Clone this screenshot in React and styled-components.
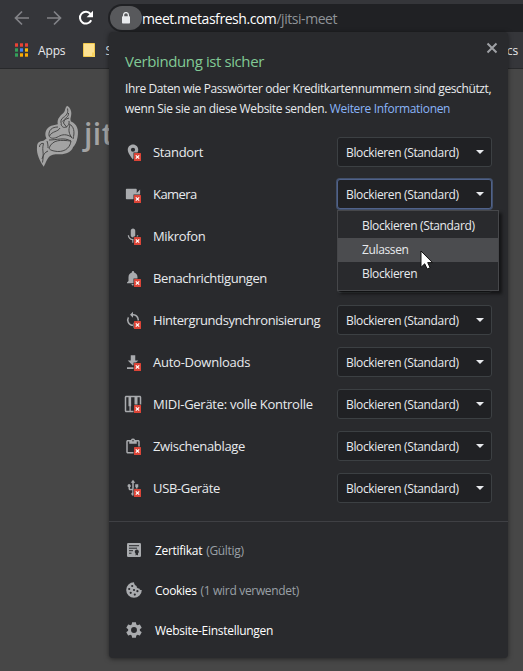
import React from 'react';
import styled, { createGlobalStyle } from 'styled-components';

const GlobalStyle = createGlobalStyle`
  * { box-sizing: border-box; }
  body {
    margin: 0;
    overflow: hidden;
    background: #474747;
    font-family: "Open Sans", "Noto Sans", sans-serif;
    font-size: 12px;
    color: #e8eaed;
  }
  svg { display: block; flex: none; }
`;

const Browser = styled.div`
  position: relative;
  width: 523px;
  height: 671px;
  overflow: hidden;
`;
const Toolbar = styled.header`
  display: flex;
  align-items: center;
  height: 36px;
  padding-left: 12px;
  background: #35363a;
`;
const NavButton = styled.span`
  display: flex;
  justify-content: center;
  width: 20px;
  margin-right: 12px;
`;
const AddressBar = styled.div`
  display: flex;
  align-items: center;
  flex: 1;
  height: 28px;
  padding-left: 2px;
  background: #202124;
  border-radius: 14px 0 0 14px;
  font-size: 14px;
  letter-spacing: -0.45px;
  color: #fff;
  white-space: nowrap;
`;
const LockChip = styled.span`
  display: flex;
  align-items: center;
  justify-content: center;
  width: 32px;
  height: 24px;
  border-radius: 12px;
  background: #58595c;
`;
const UrlPath = styled.span`
  color: #8f9398;
`;
const Bookmarks = styled.nav`
  display: flex;
  align-items: center;
  height: 33px;
  padding: 0 5px 4px 15px;
  background: #35363a;
  border-bottom: 1px solid #28292b;
  letter-spacing: -0.15px;
`;
const BookmarkLabel = styled.span`
  margin-left: ${(p) => p.$gap}px;
`;
const Spacer = styled.span`
  flex: 1;
`;
const Page = styled.main`
  display: flex;
  padding: 36px 0 0 36px;
  color: #a3a3a3;
`;
const Brand = styled.span`
  margin: 1px 0 0 5px;
  font: 600 30px/55px "Open Sans", sans-serif;
  letter-spacing: 0.5px;
`;

const Bubble = styled.section`
  position: absolute;
  left: 109px;
  top: 32px;
  width: 399px;
  height: 626px;
  padding-top: 18px;
  background: #292a2d;
  border-radius: 4px;
  box-shadow: 0 1px 5px rgba(0, 0, 0, 0.5);
`;
const CloseButton = styled.span`
  position: absolute;
  right: 10px;
  top: 10px;
`;
const Title = styled.h1`
  margin: 0 0 0 16px;
  font-size: 15px;
  line-height: 22px;
  font-weight: 400;
  letter-spacing: -0.4px;
  color: #81c995;
`;
const Description = styled.p`
  margin: 7px 0 0 16px;
  line-height: 20px;
  white-space: nowrap;
  letter-spacing: ${(p) => p.$track};
  & + & { margin-top: 0; }
`;
const InfoLink = styled.a`
  color: #8ab4f8;
`;
const Permissions = styled.div`
  display: flex;
  flex-direction: column;
  margin-top: 12px;
`;
const PermissionRow = styled.div`
  display: flex;
  align-items: center;
  height: 42px;
  padding: 0 16px 0 15px;
`;
const PermissionName = styled.span`
  flex: 1;
  margin-left: 11px;
  font-size: 13px;
  white-space: nowrap;
  letter-spacing: ${(p) => p.$track}px;
`;
const SelectBox = styled.div`
  position: relative;
  display: flex;
  align-items: center;
  justify-content: space-between;
  width: 155px;
  height: 30px;
  padding: 0 7px 0 8px;
  background: #202124;
  border: 1px solid #3c4043;
  border-radius: 3px;
  letter-spacing: -0.36px;
  white-space: nowrap;
  ${(p) => p.$open && 'border-color: #50628a; box-shadow: 0 0 0 1px #42506b;'}
`;
const Menu = styled.div`
  position: absolute;
  z-index: 2;
  left: -1px;
  top: 30px;
  width: 162px;
  height: 81px;
  padding-top: 3px;
  background: #292a2d;
  border: 1px solid #46474a;
  box-shadow: 3px 3px 3px rgba(0, 0, 0, 0.5);
`;
const MenuItem = styled.div`
  height: 24px;
  padding-left: 24px;
  line-height: 24px;
  background: ${(p) => (p.$active ? '#4b4c4f' : 'transparent')};
`;
const Pointer = styled.svg`
  position: absolute;
  left: 82px;
  top: 39px;
`;
const Footer = styled.div`
  margin-top: 12px;
  padding-top: 8px;
  border-top: 1px solid #3f4044;
`;
const FooterRow = styled.div`
  display: flex;
  align-items: center;
  height: 40px;
  padding-left: 16px;
  color: #fff;
  letter-spacing: ${(p) => p.$track}px;
`;
const FooterLabel = styled.span`
  margin-left: 12px;
`;
const Detail = styled.span`
  margin-left: 4px;
  color: #9aa0a6;
`;

const ICONS = {
  place: <path fillRule="evenodd" d="M12 2C8.1 2 5 5.1 5 9c0 5.3 7 13 7 13s7-7.700 7-13c0-3.900-3.100-7-7-7zm0 4.200a2.800 2.800 0 1 1 0 5.600 2.800 2.800 0 0 1 0-5.600z" />,
  camera: <path d="M17 10.500V6c0-.6-.4-1-1-1H3.500c-.6 0-1 .4-1 1v12c0 .6.400 1 1 1H16c.6 0 1-.4 1-1v-4l4.500 4V6z" />,
  mic: <path d="M12 14c1.700 0 3-1.300 3-3V5c0-1.700-1.300-3-3-3S9 3.300 9 5v6c0 1.700 1.300 3 3 3zm5.300-3c0 3-2.500 5.100-5.300 5.100S6.700 14 6.700 11H5c0 3.400 2.700 6.200 6 6.700V21h2v-3.300c3.300-.5 6-3.300 6-6.700z" />,
  bell: <path d="M12 22c1.100 0 2-.9 2-2h-4c0 1.100.9 2 2 2zm6-6v-5c0-3.100-1.600-5.600-4.500-6.300V4a1.500 1.500 0 0 0-3 0v.7C7.600 5.400 6 7.900 6 11v5l-2 2v1h16v-1z" />,
  sync: <path d="M12 4V1L8 5l4 4V6c3.300 0 6 2.700 6 6 0 1-.25 2-.7 2.800l1.500 1.500A8 8 0 0 0 12 4zm0 14c-3.300 0-6-2.700-6-6 0-1 .25-2 .7-2.800L5.200 7.700A8 8 0 0 0 12 20v3l4-4-4-4z" />,
  download: <path d="M19 10h-4V3H9v7H5l7 7zM4 19v2.200h16V19z" />,
  midi: <path fillRule="evenodd" d="M3 1h18c1.100 0 2 .9 2 2v18c0 1.100-.9 2-2 2H3c-1.100 0-2-.9-2-2V3c0-1.100.9-2 2-2zm0 2v18h4.300v-6H6V3zm6.500 0v12H9v6h6v-6h-1V3zM18 3v12h-1v6h4V3z" />,
  clipboard: <path fillRule="evenodd" d="M19 4h-4.200a3 3 0 0 0-5.600 0H5c-1.100 0-2 .9-2 2v14c0 1.100.9 2 2 2h14c1.100 0 2-.9 2-2V6c0-1.100-.9-2-2-2zm-7 0a1 1 0 1 1 0 2 1 1 0 0 1 0-2zm7 16H5V6h2v3h10V6h2z" />,
  usb: <path d="M15 7v4h1v2h-3V5h2l-3-4-3 4h2v8H8v-2.100A2.200 2.200 0 1 0 6 11v2c0 1.100.9 2 2 2h3v3a2.200 2.200 0 1 0 2 0v-3h3c1.100 0 2-.9 2-2v-2h1V7z" />,
};

const BlockedIcon = ({ name }) => (
  <svg width="18" height="18" viewBox="0 0 18 18">
    <g transform="scale(.75)" fill="#a9abae">{ICONS[name]}</g>
    <path d="M9.500 9.500H18V18H9.500z" fill="#292a2d" />
    <rect x="10" y="10" width="7" height="8" rx=".5" fill="#db4437" />
    <path d="M11.800 12.300l3.400 3.400m0-3.400l-3.400 3.400" stroke="#fff" strokeWidth="1.200" />
  </svg>
);

const CertificateIcon = () => (
  <svg width="18" height="18" viewBox="0 0 18 18">
    <rect x="2" y="2" width="14" height="14" rx="1.200" fill="#a9abae" />
    <path d="M4 4.700h10M4 7.200h8M4 9.700h4M4 12.200h2.500" stroke="#292a2d" strokeWidth="1" />
    <path d="M11.800 8.600a2.100 2.100 0 0 1 1.200 3.800V14.500l-1.200-.8-1.200.8v-2.100a2.100 2.100 0 0 1 1.200-3.800z" fill="#292a2d" />
  </svg>
);
const CookieIcon = () => (
  <svg width="18" height="18" viewBox="0 0 18 18">
    <path d="M9 1.200A7.800 7.800 0 1 0 16.800 9c-1.200.2-2.200-.4-2.500-1.500-1.700.2-2.900-.8-2.700-2.500-1.500-.3-2.400-1.800-2.600-3.800z" fill="#a9abae" />
    <g fill="#292a2d"><circle cx="7.200" cy="5" r="1.100" /><circle cx="4.200" cy="8" r="1.100" /><circle cx="9" cy="9" r="1.100" /><circle cx="5.700" cy="11.800" r="1.100" /><circle cx="12.400" cy="10.200" r="1.100" /><circle cx="9.800" cy="13.600" r="1.100" /></g>
  </svg>
);
const GearIcon = () => (
  <svg width="18" height="18" viewBox="1 1 22 22">
    <path fill="#a9abae" d="M19.140 12.940c.04-.3.060-.61.060-.94 0-.32-.02-.64-.07-.94l2.030-1.580c.18-.14.23-.41.120-.61l-1.920-3.320c-.12-.22-.37-.29-.59-.22l-2.390.96c-.5-.38-1.030-.7-1.620-.94l-.36-2.540c-.04-.24-.24-.41-.48-.41h-3.840c-.24 0-.43.170-.47.410l-.36 2.540c-.59.240-1.130.570-1.620.940l-2.390-.96c-.22-.08-.47 0-.59.220L2.740 8.870c-.12.210-.08.470.12.610l2.030 1.580c-.05.300-.09.630-.09.940s.02.640.07.940l-2.030 1.580c-.18.140-.23.410-.12.610l1.920 3.320c.12.220.37.290.59.220l2.390-.96c.5.380 1.030.7 1.620.940l.36 2.540c.05.240.24.410.48.410h3.840c.24 0 .44-.17.470-.41l.36-2.540c.59-.24 1.130-.56 1.620-.94l2.390.96c.22.080.47 0 .59-.22l1.920-3.320c.12-.22.070-.47-.12-.61l-2.010-1.580zM12 15.600a3.600 3.600 0 1 1 0-7.200 3.600 3.600 0 0 1 0 7.200z" />
  </svg>
);
const Caret = () => (
  <svg width="8" height="4" viewBox="0 0 8 4"><path d="M0 0h8L4 4z" fill="#e8eaed" /></svg>
);
const NavArrow = ({ forward }) => (
  <svg width="16" height="16" viewBox="0 0 16 16" fill="none" stroke="#828387" strokeWidth="1.700">
    {forward ? <path d="M1 8h13M8 1.500L14.500 8 8 14.500" /> : <path d="M15 8H2M8 1.500L1.500 8 8 14.500" />}
  </svg>
);
const AppsGrid = () => {
  const colors = ['#ea4335', '#ea4335', '#ea4335', '#34a05a', '#4285f4', '#fbbc05', '#34a05a', '#fbab05', '#fbab05'];
  return (
    <svg width="13" height="14" viewBox="0 0 13 14">
      {colors.map((c, i) => <rect key={i} x={(i % 3) * 5} y={Math.floor(i / 3) * 5 + 0.300} width="3" height="3.400" fill={c} />)}
    </svg>
  );
};
const JitsiLogo = () => (
  <svg width="43" height="64" viewBox="0 0 43 64" fill="#a3a3a3">
    <path d="M31 .7c3.500 2 5.400 6 3.800 11.200-.6 2-.4 3.200.2 4.600 6 2.500 8 8 6.600 15.500-.8 5-2.600 8.200-4.600 10.300-1.600 5-7.500 7.300-14 7-5 0-8 .3-10.500 3.200-2 2.300-2.600 5.500-4.800 9.200C3.800 56 .3 49 1 41.700c.2-4 2.400-5.700 6.500-5.900l3-2.300c-2.500-4.500-.8-10.500 4.800-12.700l6.500-1.500c-1.200-6 3.300-9 6.200-12 1.300-1.700.8-4.500 3-6.600z" />
    <g fill="none" stroke="#474747" strokeWidth="1">
      <path d="M31.500 3.500c1 4.500-1 7-4.200 9-2.500 1.600-2.800 3.800-2 6.300M32.500 8c.5 4-3.500 5-6 8.500M33 13c-3 1-5 1.500-5.500 5l3 4c2-1.500 3-3.500 2.500-6" />
      <path d="M25 19c1 4 4 4 6 2.500M22 22c-6 0-9.500 3-9 8.500 1 4 6 3 9.500 1s8-3 13.500 1M24 23c-2 4-8 3-10.500 8M33 19c5 2 6 8 4 15M34 20c-2 5-1 9 2 13" />
      <path d="M13 35c8 0 15-3 22 1M13 43c4-9 12-8 22-7-1 8-8 12-17 10-3-.5-5-2-5-3zM11 36c1 3 1 5 1 7M3.500 42c0-3 2-4 4-3.500-2 8 1 8-1 19M12 46c-3 1-5 4-6 8" />
    </g>
  </svg>
);

/* Rows flagged `covered` lie beneath the open options menu, so their select shows no value. */
const PERMISSIONS = [
  { icon: 'place', name: 'Standort', track: -0.33 },
  { icon: 'camera', name: 'Kamera', track: -0.55, open: true },
  { icon: 'mic', name: 'Mikrofon', track: -0.33, covered: true },
  { icon: 'bell', name: 'Benachrichtigungen', track: -0.4, covered: true },
  { icon: 'sync', name: 'Hintergrundsynchronisierung', track: -0.43 },
  { icon: 'download', name: 'Auto-Downloads', track: -0.25 },
  { icon: 'midi', name: 'MIDI-Geräte: volle Kontrolle', track: -0.28 },
  { icon: 'clipboard', name: 'Zwischenablage', track: -0.32 },
  { icon: 'usb', name: 'USB-Geräte', track: -0.35 },
];

const OptionsMenu = () => (
  <Menu>
    <MenuItem>Blockieren (Standard)</MenuItem>
    <MenuItem $active>Zulassen</MenuItem>
    <MenuItem>Blockieren</MenuItem>
    <Pointer width="13" height="20" viewBox="0 0 13 20">
      <path d="M1 1v16.300l3.700-3.500L7.200 19l2.900-1.300-2.400-5.100h4.800z" fill="#fff" stroke="#111" strokeWidth="1" />
    </Pointer>
  </Menu>
);

export default function App() {
  return (
    <Browser>
      <GlobalStyle />
      <Toolbar>
        <NavButton><NavArrow /></NavButton>
        <NavButton><NavArrow forward /></NavButton>
        <NavButton>
          <svg width="16" height="16" viewBox="0 0 16 16">
            <path d="M13.200 10.300A5.900 5.900 0 1 1 12.500 4" fill="none" stroke="#fff" strokeWidth="2" />
            <path d="M15 .8v6.400H8.600z" fill="#fff" />
          </svg>
        </NavButton>
        <AddressBar>
          <LockChip>
            <svg width="10" height="12" viewBox="0 0 10 12">
              <path d="M2.600 5V3a2.400 2.400 0 0 1 4.800 0v2" fill="none" stroke="#e8eaed" strokeWidth="1.300" />
              <rect x="1" y="4.300" width="8" height="7.200" rx=".8" fill="#e8eaed" />
            </svg>
          </LockChip>
          <span>meet.metasfresh.com<UrlPath>/jitsi-meet</UrlPath></span>
        </AddressBar>
      </Toolbar>
      <Bookmarks>
        <AppsGrid />
        <BookmarkLabel $gap={10}>Apps</BookmarkLabel>
        <BookmarkLabel $gap={18}>
          <svg width="12" height="14" viewBox="0 0 12 14">
            <path d="M.5.5h11v13H.5z" fill="#fde293" stroke="#f2c94c" />
            <path d="M9 9.500h3V14H9z" fill="#f9d35f" />
          </svg>
        </BookmarkLabel>
        <BookmarkLabel $gap={10}>S</BookmarkLabel>
        <Spacer />
        <span>cs</span>
      </Bookmarks>
      <Page>
        <JitsiLogo />
        <Brand>jitsi</Brand>
      </Page>

      <Bubble>
        <CloseButton>
          <svg width="12" height="12" viewBox="0 0 12 12"><path d="M1.500 1.500l9 9m0-9l-9 9" stroke="#9fa1a5" strokeWidth="2" /></svg>
        </CloseButton>
        <Title>Verbindung ist sicher</Title>
        <Description $track="-0.39px">Ihre Daten wie Passwörter oder Kreditkartennummern sind geschützt,</Description>
        <Description $track="-0.33px">wenn Sie sie an diese Website senden. <InfoLink>Weitere Informationen</InfoLink></Description>
        <Permissions>
          {PERMISSIONS.map(({ icon, name, track, open, covered }) => (
            <PermissionRow key={icon}>
              <BlockedIcon name={icon} />
              <PermissionName $track={track}>{name}</PermissionName>
              <SelectBox $open={open}>
                {!covered && <span>Blockieren (Standard)</span>}
                {!covered && <Caret />}
                {open && <OptionsMenu />}
              </SelectBox>
            </PermissionRow>
          ))}
        </Permissions>
        <Footer>
          <FooterRow $track={-0.3}><CertificateIcon /><FooterLabel>Zertifikat</FooterLabel><Detail>(Gültig)</Detail></FooterRow>
          <FooterRow $track={-0.32}><CookieIcon /><FooterLabel>Cookies</FooterLabel><Detail>(1 wird verwendet)</Detail></FooterRow>
          <FooterRow $track={-0.28}><GearIcon /><FooterLabel>Website-Einstellungen</FooterLabel></FooterRow>
        </Footer>
      </Bubble>
    </Browser>
  );
}
